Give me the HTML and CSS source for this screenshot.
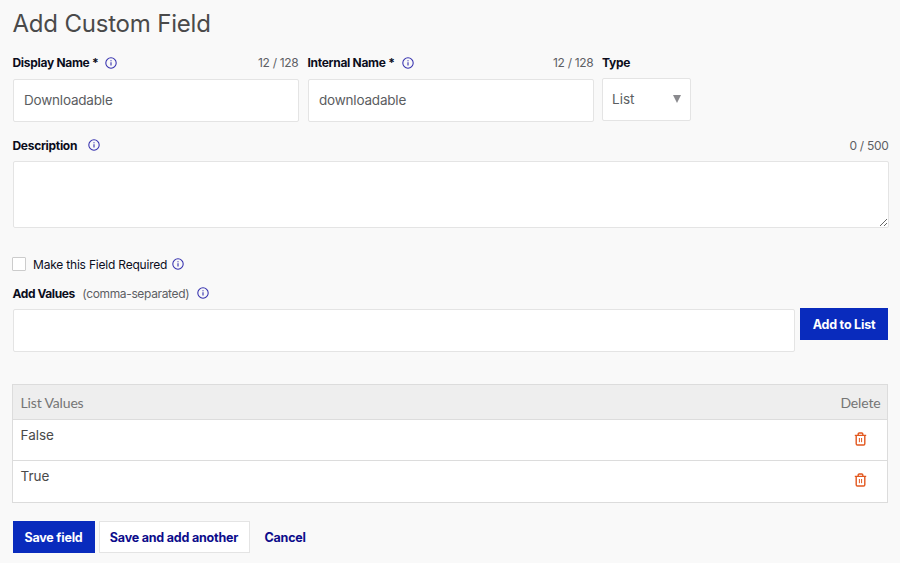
FILE: index.html
```html
<!DOCTYPE html>
<html lang="en">
<head>
<meta charset="utf-8">
<title>Add Custom Field</title>
<link rel="stylesheet" href="styles.css">
</head>
<body>
<svg class="defs" width="0" height="0">
  <symbol id="info" viewBox="0 0 12 12"><circle cx="6" cy="6" r="5.2" fill="none" stroke="currentColor" stroke-width="1.05"/><path d="M6 5.3v3.1M6 3.2v1.1" stroke="currentColor" stroke-width="1.1"/></symbol>
  <symbol id="trash" viewBox="0 0 12 14"><path d="M.3 3.4h11.4M1.7 3.6v8.2a1.2 1.2 0 0 0 1.2 1.2h6.2a1.2 1.2 0 0 0 1.2-1.2V3.6M3.7 3.2V2a1 1 0 0 1 1-1h2.6a1 1 0 0 1 1 1v1.2" fill="none" stroke="currentColor" stroke-width="1.4"/><path d="M4.9 6v4.2M7.1 6v4.2" stroke="currentColor" stroke-width="1"/></symbol>
</svg>
<form class="page">
  <h1 class="title">Add Custom Field</h1>
  <div class="names">
    <div class="field">
      <div class="label-row"><label class="label" for="display">Display Name *</label><svg class="info"><use href="#info"/></svg><span class="count">12 / 128</span></div>
      <input class="input" id="display" value="Downloadable">
    </div>
    <div class="field">
      <div class="label-row"><label class="label" for="internal">Internal Name *</label><svg class="info"><use href="#info"/></svg><span class="count">12 / 128</span></div>
      <input class="input" id="internal" value="downloadable">
    </div>
    <div class="type">
      <div class="label-row"><span class="label">Type</span></div>
      <div class="select"><span>List</span><i class="arrow"></i></div>
    </div>
  </div>
  <div class="label-row description-label"><label class="label" for="description">Description</label><svg class="info"><use href="#info"/></svg><span class="count">0 / 500</span></div>
  <textarea class="textarea" id="description"></textarea>
  <div class="required"><span class="checkbox"></span><span class="required-text">Make this Field Required</span><svg class="info"><use href="#info"/></svg></div>
  <div class="label-row values-label"><label class="label" for="values">Add Values</label><span class="hint">(comma-separated)</span><svg class="info"><use href="#info"/></svg></div>
  <div class="add-row"><input class="input" id="values"><button type="button" class="button primary add">Add to List</button></div>
  <div class="table">
    <div class="thead"><span>List Values</span><span>Delete</span></div>
    <div class="row"><span>False</span><svg class="trash"><use href="#trash"/></svg></div>
    <div class="row"><span>True</span><svg class="trash"><use href="#trash"/></svg></div>
  </div>
  <div class="actions">
    <button type="button" class="button primary save">Save field</button>
    <button type="button" class="button secondary">Save and add another</button>
    <button type="button" class="button cancel">Cancel</button>
  </div>
</form>
</body>
</html>
```
FILE: styles.css
```css
* { box-sizing: border-box; }
body { margin: 0; height: 563px; overflow: hidden; background: #f9f9f9; color: #0b0d1c; font-family: Inter, "Liberation Sans", sans-serif; }
.defs { display: block; height: 0; }
.page { width: 876px; margin-left: 12.5px; }
.title { margin: 0; height: 54px; line-height: 47px; font-size: 24px; letter-spacing: -0.2px; font-weight: 400; color: #4a4a4a; white-space: nowrap; }
.names { display: flex; gap: 9px; }
.field { width: 286px; }
.type { width: 89px; margin-left: -0.5px; }
.label-row { display: flex; align-items: center; height: 18px; font-size: 12px; white-space: nowrap; }
.names .label-row { height: 17px; margin-bottom: 8px; }
.names .input { margin-top: 0; }
.label { font-weight: 700; font-size: 12px; letter-spacing: -0.3px; }
.info { width: 12px; height: 12px; margin-left: 7.5px; flex: none; color: #3530ae; }
.names .field:first-child .info { margin-left: 7px; }
.count { margin-left: auto; color: #5d5f64; font-size: 12px; letter-spacing: -0.3px; }
.input { display: block; width: 286px; height: 43px; margin: 7px 0 0 0.5px; padding: 0 10px 2px; border: 1px solid #e4e4e4; border-radius: 2px; background: #fff; font: 13.5px Inter, sans-serif; letter-spacing: -0.2px; color: #5b5d61; outline: 0; }
.select { display: flex; justify-content: space-between; align-items: center; height: 43px; margin-top: -1px; padding: 0 9px 2px; border: 1px solid #e4e4e4; border-radius: 2px; background: #fff; font-size: 13.5px; color: #5b5d61; }
.type .label-row { margin-bottom: 8px; }
.arrow { border: 4px solid transparent; border-top: 8px solid #8a8a8e; border-bottom: 0; }
.description-label { margin-top: 14px; }
.description-label .info { margin-left: 11px; }
.textarea { display: block; width: 876px; height: 67px; margin: 7px 0 0 0.5px; border: 1px solid #e4e4e4; border-radius: 2px; background: #fff; resize: vertical; outline: 0; }
.required { display: flex; align-items: center; height: 18px; margin-top: 27px; font-size: 12px; white-space: nowrap; }
.required-text { padding-top: 1px; letter-spacing: -0.2px; }
.checkbox { width: 14px; height: 14px; margin: 0 7px 0 -0.5px; border: 1px solid #ccc; border-radius: 1px; background: #fff; }
.required .info { margin-left: 5px; }
.values-label { margin-top: 11px; }
.values-label .label { letter-spacing: -0.42px; }
.hint { margin-left: 7.5px; color: #5d5f64; font-size: 12px; letter-spacing: -0.35px; }
.values-label .info { margin-left: 7.5px; }
.add-row { display: flex; align-items: flex-start; gap: 5px; margin-top: 6px; }
.add-row .input { width: 782px; margin-top: 1px; }
.button { display: flex; justify-content: center; align-items: center; height: 32px; padding: 0; border: 0; font: 700 12.5px Inter, sans-serif; letter-spacing: -0.2px; white-space: nowrap; }
.primary { background: #092bbd; color: #fff; }
.add { width: 88px; }
.table { width: 876px; margin: 32px 0 0 -0.5px; border: 1px solid #dcdcdc; }
.thead { display: flex; justify-content: space-between; align-items: center; height: 34px; padding: 0 6.5px 0 7.5px; background: #eee; color: #757575; font: 14px Lato, sans-serif; letter-spacing: -0.15px; }
.row { display: flex; justify-content: space-between; height: 41px; padding: 7px 20px 0 7.5px; border-top: 1px solid #dcdcdc; background: #fff; color: #4a4a4a; font-size: 13.5px; line-height: 16px; }
.row:last-child { height: 42px; }
.trash { width: 13px; height: 14px; margin-top: 5px; color: #e2571e; }
.actions { display: flex; margin-top: 18px; }
.save { width: 82px; }
.secondary { width: 151px; margin-left: 4px; border: 1px solid #e4e4e4; background: #fff; color: #0c0c8b; }
.cancel { margin-left: 15px; background: none; color: #0c0c8b; }
```
